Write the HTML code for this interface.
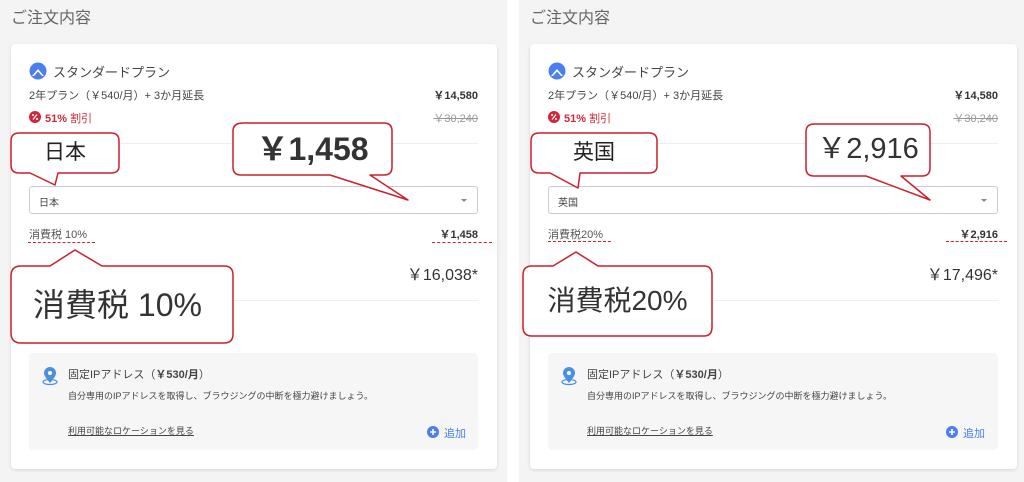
<!DOCTYPE html>
<html><head><meta charset="utf-8"><style>
*{margin:0;padding:0;box-sizing:border-box}
body{width:1024px;height:482px;overflow:hidden;background:#fff;font-family:"Liberation Sans","Noto Sans CJK JP",sans-serif;position:relative;color:#333}
.p{position:absolute;top:0;height:482px;background:#f4f4f4}
.a{position:absolute;white-space:nowrap}
.card{position:absolute;left:11px;top:44px;width:486px;height:425px;background:#fff;border-radius:4px;box-shadow:0 1px 3px rgba(0,0,0,.12)}
.r{text-align:right}
.dd{position:absolute;left:29px;top:186px;width:449px;height:28px;border:1px solid #ccc;border-radius:3px;background:#fff}
.ip{position:absolute;left:29px;top:353px;width:449px;height:97px;background:#f6f6f6;border-radius:4px}
.dash{position:absolute;height:0;border-top:1.5px dashed #d0202a}
.co{position:absolute;font-family:"Liberation Sans","Noto Sans CJK JP",sans-serif;color:#222;text-align:center;white-space:nowrap}
</style></head><body>
<div class="p" style="left:0;width:507px"></div>
<div class="p" style="left:519px;width:505px"></div>

<div style="position:absolute;left:0;top:0;width:507px;height:482px">
<div class="a" style="left:11px;top:4px;font-size:16px;color:#666">ご注文内容</div>
<div class="card"></div>
<svg class="a" style="left:29px;top:62px" width="18" height="18"><circle cx="9" cy="9" r="8.5" fill="#4a7ff0"/><path d="M3 14 L9 7 L15 14 Z" fill="#fff"/><path d="M5 14 L9 9.5 L13 14Z" fill="#4a7ff0"/></svg>
<div class="a" style="left:53px;top:62px;font-size:13px;color:#444">スタンダードプラン</div>
<div class="a" style="left:29px;top:87px;font-size:11px;color:#444">2年プラン（￥540/月）+ 3か月延長</div>
<div class="a r" style="right:29px;top:87px;font-size:11px;font-weight:bold;color:#333">￥14,580</div>
<svg class="a" style="left:29px;top:111px" width="12" height="12"><circle cx="6" cy="6" r="6" fill="#d0283a"/><path d="M4 8.5L8 3.5" stroke="#fff" stroke-width="1.2"/><circle cx="4" cy="4" r="1" fill="#fff"/><circle cx="8" cy="8" r="1" fill="#fff"/></svg>
<div class="a" style="left:45px;top:110px;font-size:11px;color:#d0283a;font-weight:bold">51% <span style="font-weight:normal">割引</span></div>
<div class="a r" style="right:29px;top:110px;font-size:11px;color:#999;text-decoration:line-through">￥30,240</div>
<div class="a" style="left:29px;top:143px;width:449px;height:1px;background:#eee"></div>
<div class="dd"><div class="a" style="left:9px;top:7px;font-size:10px;color:#444">日本</div><div class="a" style="right:10px;top:12px;width:0;height:0;border-left:3px solid transparent;border-right:3px solid transparent;border-top:3px solid #888"></div></div>
<div class="a" style="left:29px;top:226px;font-size:11px;color:#555">消費税 10%</div>
<div class="a r" style="right:29px;top:226px;font-size:11px;color:#333;font-weight:bold">￥1,458</div>
<div class="dash" style="left:28px;top:242px;width:67px"></div>
<div class="dash" style="left:432px;top:242px;width:60px"></div>
<div class="a r" style="right:29px;top:261px;font-size:16px;color:#333">￥16,038*</div>
<div class="a" style="left:233px;top:300px;width:245px;height:1px;background:#eee"></div>
<div class="ip">
<svg class="a" style="left:12px;top:13px" width="18" height="20"><ellipse cx="9" cy="16" rx="7" ry="2.5" fill="none" stroke="#4a90e2" stroke-width="1.2"/><path d="M9 17 C4 11 3 9 3 7 A6 6 0 0 1 15 7 C15 9 14 11 9 17Z" fill="#4a90e2"/><circle cx="9" cy="7" r="2" fill="#fff"/></svg>
<div class="a" style="left:39px;top:13px;font-size:11px;color:#444">固定IPアドレス（<b>￥530/月</b>）</div>
<div class="a" style="left:39px;top:36px;font-size:9px;color:#444">自分専用のIPアドレスを取得し、ブラウジングの中断を極力避けましょう。</div>
<div class="a" style="left:39px;top:71px;font-size:9px;color:#444;text-decoration:underline">利用可能なロケーションを見る</div>
<svg class="a" style="left:398px;top:73px" width="12" height="12"><circle cx="6" cy="6" r="6" fill="#4a7ff0"/><path d="M6 3v6M3 6h6" stroke="#fff" stroke-width="1.6"/></svg>
<div class="a" style="left:415px;top:72px;font-size:11px;color:#4a7ff0">追加</div>
</div>
</div>

<div style="position:absolute;left:519px;top:0;width:505px;height:482px">
<div class="a" style="left:11px;top:4px;font-size:16px;color:#666">ご注文内容</div>
<div class="card" style="width:487px"></div>
<svg class="a" style="left:29px;top:62px" width="18" height="18"><circle cx="9" cy="9" r="8.5" fill="#4a7ff0"/><path d="M3 14 L9 7 L15 14 Z" fill="#fff"/><path d="M5 14 L9 9.5 L13 14Z" fill="#4a7ff0"/></svg>
<div class="a" style="left:53px;top:62px;font-size:13px;color:#444">スタンダードプラン</div>
<div class="a" style="left:29px;top:87px;font-size:11px;color:#444">2年プラン（￥540/月）+ 3か月延長</div>
<div class="a r" style="right:26px;top:87px;font-size:11px;font-weight:bold;color:#333">￥14,580</div>
<svg class="a" style="left:29px;top:111px" width="12" height="12"><circle cx="6" cy="6" r="6" fill="#d0283a"/><path d="M4 8.5L8 3.5" stroke="#fff" stroke-width="1.2"/><circle cx="4" cy="4" r="1" fill="#fff"/><circle cx="8" cy="8" r="1" fill="#fff"/></svg>
<div class="a" style="left:45px;top:110px;font-size:11px;color:#d0283a;font-weight:bold">51% <span style="font-weight:normal">割引</span></div>
<div class="a r" style="right:26px;top:110px;font-size:11px;color:#999;text-decoration:line-through">￥30,240</div>
<div class="a" style="left:29px;top:143px;width:450px;height:1px;background:#eee"></div>
<div class="dd" style="width:450px"><div class="a" style="left:9px;top:7px;font-size:10px;color:#444">英国</div><div class="a" style="right:10px;top:12px;width:0;height:0;border-left:3px solid transparent;border-right:3px solid transparent;border-top:3px solid #888"></div></div>
<div class="a" style="left:29px;top:226px;font-size:11px;color:#555">消費税20%</div>
<div class="a r" style="right:26px;top:226px;font-size:11px;color:#333;font-weight:bold">￥2,916</div>
<div class="dash" style="left:29px;top:241px;width:63px"></div>
<div class="dash" style="left:427px;top:241px;width:61px"></div>
<div class="a r" style="right:26px;top:261px;font-size:16px;color:#333">￥17,496*</div>
<div class="a" style="left:195px;top:300px;width:284px;height:1px;background:#eee"></div>
<div class="ip" style="width:450px">
<svg class="a" style="left:12px;top:13px" width="18" height="20"><ellipse cx="9" cy="16" rx="7" ry="2.5" fill="none" stroke="#4a90e2" stroke-width="1.2"/><path d="M9 17 C4 11 3 9 3 7 A6 6 0 0 1 15 7 C15 9 14 11 9 17Z" fill="#4a90e2"/><circle cx="9" cy="7" r="2" fill="#fff"/></svg>
<div class="a" style="left:39px;top:13px;font-size:11px;color:#444">固定IPアドレス（<b>￥530/月</b>）</div>
<div class="a" style="left:39px;top:36px;font-size:9px;color:#444">自分専用のIPアドレスを取得し、ブラウジングの中断を極力避けましょう。</div>
<div class="a" style="left:39px;top:71px;font-size:9px;color:#444;text-decoration:underline">利用可能なロケーションを見る</div>
<svg class="a" style="left:398px;top:73px" width="12" height="12"><circle cx="6" cy="6" r="6" fill="#4a7ff0"/><path d="M6 3v6M3 6h6" stroke="#fff" stroke-width="1.6"/></svg>
<div class="a" style="left:415px;top:72px;font-size:11px;color:#4a7ff0">追加</div>
</div>
</div>

<svg class="a" style="left:0;top:0" width="1024" height="482">
<g fill="#fff" stroke="#cc1f2a" stroke-width="1.5" stroke-linejoin="round">
<path d="M19 133 H111 Q119 133 119 141 V166 Q119 173 111 173 H58 L55 185 L30 173 H19 Q11 173 11 165 V141 Q11 133 19 133Z"/>
<path d="M243 123 H384 Q392 123 392 131 V167 Q392 175 384 175 H370 L408 200 L330 175 H241 Q233 175 233 167 V131 Q233 123 243 123Z"/>
<path d="M21 266 H50 L75 250 L102 266 H224 Q233 266 233 275 V334 Q233 343 224 343 H21 Q11 343 11 333 V276 Q11 266 21 266Z"/>
<path d="M539 133 H649 Q657 133 657 141 V166 Q657 173 649 173 H580 L578 188 L550 173 H539 Q531 173 531 165 V141 Q531 133 539 133Z"/>
<path d="M814 124 H922 Q930 124 930 132 V168 Q930 176 922 176 H901 L930 200 L866 176 H814 Q806 176 806 168 V132 Q806 124 814 124Z"/>
<path d="M532 266 H553 L576 252 L598 266 H704 Q712 266 712 275 V327 Q712 336 704 336 H532 Q523 336 523 327 V275 Q523 266 532 266Z"/>
</g>
</svg>
<div class="co" style="left:11px;top:140px;width:108px;font-size:21px;line-height:26px">日本</div>
<div class="co" style="left:233px;top:130px;width:159px;font-size:32px;line-height:38px;color:#333;font-weight:bold">￥1,458</div>
<div class="co" style="left:33px;top:285px;text-align:left;font-size:32px;line-height:40px;color:#333">消費税 10%</div>
<div class="co" style="left:531px;top:140px;width:126px;font-size:21px;line-height:26px">英国</div>
<div class="co" style="left:806px;top:131px;width:124px;font-size:29px;line-height:36px;color:#333">￥2,916</div>
<div class="co" style="left:523px;top:282px;width:189px;font-size:28px;line-height:38px;color:#333">消費税20%</div>
</body></html>
